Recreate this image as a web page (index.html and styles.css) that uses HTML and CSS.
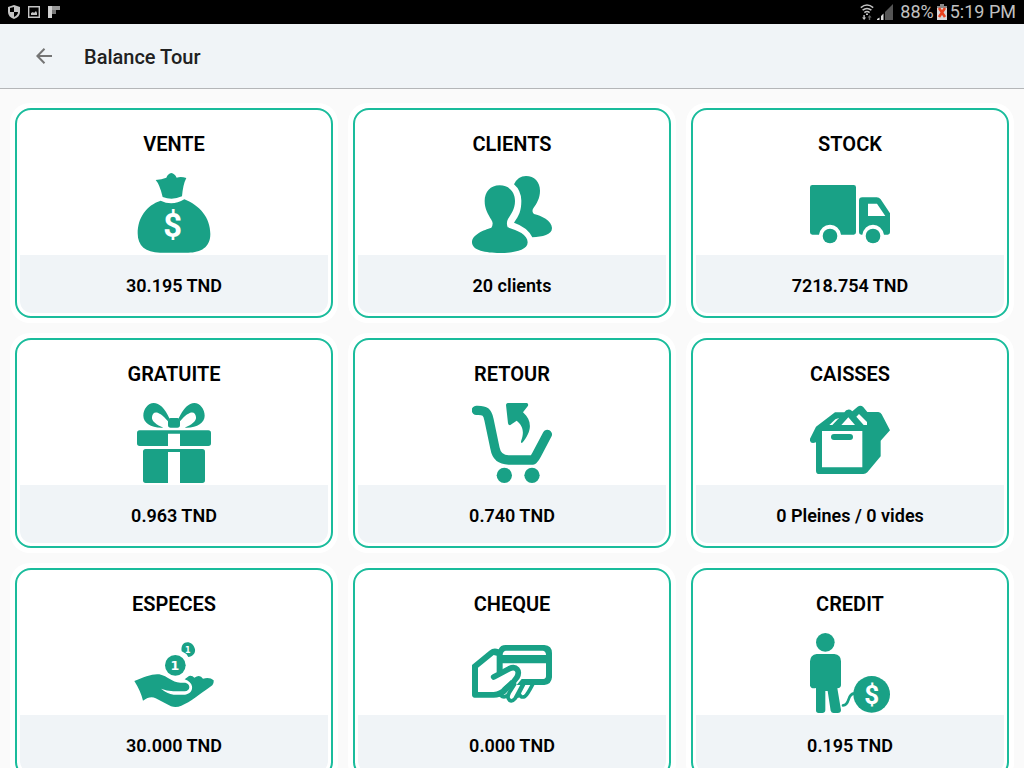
FILE: index.html
```html
<!DOCTYPE html>
<html lang="fr">
<head>
<meta charset="utf-8">
<meta name="viewport" content="width=device-width, initial-scale=1">
<title>Balance Tour</title>
<link rel="stylesheet" href="styles.css">
</head>
<body>
<div class="status">
  <div class="status-group status-left">
    <svg class="shield" viewBox="0 0 12 14" aria-hidden="true"><path fill="#c4c4c4" d="M6 0 12 2V7Q12 12 6 14Q0 12 0 7V2Z"/><path d="M6 2V7H2V3ZM6 7H10Q10 10 6 12Z"/></svg>
    <svg class="picture" viewBox="0 0 12 12" aria-hidden="true"><path fill="none" stroke="#c4c4c4" stroke-width="1.4" d="M.7.7H11.3V11.3H.7Z"/><path fill="#c4c4c4" d="M3 9V7L5 6 6 7 8 5 9 7V9Z"/></svg>
    <svg class="flip" viewBox="0 0 12 12" aria-hidden="true"><path fill="#999" d="M0 0H12V4H4V12H0Z"/><path fill="#777" d="M4 4H8V8H4Z"/><path fill="#d0d0d0" d="M0 0H4V12H0Z"/></svg>
  </div>
  <div class="status-group status-right">
    <svg class="wifi" viewBox="0 0 14 16" aria-hidden="true"><g fill="none" stroke="#c4c4c4" stroke-width="1.5"><path d="M.8 3.6Q7-1.4 13.2 3.6M2.6 6.2Q7 2.6 11.4 6.2M4.4 8.6Q7 6.4 9.6 8.6"/></g><path fill="#c4c4c4" d="M6 9.5H8V11H6ZM3.4 11H4.8V13.4H6.2L4.1 16 2 13.4H3.4Z"/><path fill="#666" d="M8.8 16V13.4H7.6L9.6 11 11.6 13.4H10.2V16Z"/></svg>
    <svg class="signal" viewBox="0 0 16 16" aria-hidden="true"><path fill="#555" d="M16 0V16H8V8Z"/><path fill="#ddd" d="M0 16V15L2.500 13.500V16ZM4 16V12L6.500 9.500V16Z"/></svg>
    <span class="percent">88%</span>
    <svg class="battery" viewBox="0 0 10 16" aria-hidden="true"><path fill="#888" d="M3 0H7V2H10V5H0V2H3Z"/><path fill="#d8d8d8" d="M0 4H10V16H0Z"/><path fill="none" stroke="#e8431f" stroke-width="2.600" d="M2 4 8 13M8 4 2 13"/></svg>
    <span>5:19 PM</span>
  </div>
</div>
<header class="bar">
  <button class="back" type="button" aria-label="Retour"><svg viewBox="0 0 16 16" aria-hidden="true"><path fill="none" stroke="#757575" stroke-width="2" d="M16 8H1.500M8.500.7 1.400 8 8.500 15.300"/></svg></button>
  <h1 class="heading">Balance Tour</h1>
</header>
<main class="grid">
  <section class="cell"><div class="card">
    <h2 class="title">VENTE</h2>
    <svg class="icon" viewBox="42 24 240 240" aria-hidden="true">
      <path d="M107 45Q125 44 139 38Q144 26 154 24Q164 26 170 38Q183 34 199 39Q189 58 186 94Q157 107 128 96Q119 58 107 45Z"/>
      <path d="M122 107Q157 124 193 103C239 121 271 158 271 207C271 247 242 263 205 263H120C77 263 53 243 53 205C53 158 79 121 122 107Z"/>
      <text class="coin dollar" x="158" y="216" font-size="98">$</text>
    </svg>
    <p class="value">30.195 TND</p>
  </div></section>
  <section class="cell"><div class="card">
    <h2 class="title">CLIENTS</h2>
    <svg class="icon" viewBox="36 24 240 240" aria-hidden="true">
      <path d="M119 61C148 61 165 82 165 108C165 132 153 148 144 162Q138 173 143 187C172 196 203 208 203 232C203 259 153 264 119 264C78 264 36 257 36 232C36 208 72 195 94 188Q102 175 94 164C84 148 74 132 74 108C74 81 91 61 119 61Z"/>
      <path d="M162 58Q174 33 198 33C223 33 240 51 240 77C240 100 230 115 220 130Q214 140 222 147C243 151 276 168 276 189C276 210 247 215 217 217Q203 187 162 173C177 151 184 138 184 107Q183 76 162 58Z"/>
    </svg>
    <p class="value">20 clients</p>
  </div></section>
  <section class="cell"><div class="card">
    <h2 class="title">STOCK</h2>
    <svg class="icon" viewBox="45 24 240 240" aria-hidden="true">
      <path d="M52 60H176Q183 60 183 67V202Q183 209 176 209H138Q132 180 105 179Q78 180 72 209H52Q45 209 45 202V67Q45 60 52 60Z"/>
      <path fill-rule="evenodd" d="M202 97H245Q252 97 257 103L285 145V202Q285 209 278 209H267Q260 180 234 179Q208 180 202 209H199Q192 209 192 202V107Q192 97 202 97ZM219 116V153H271L246 116Z"/>
      <circle cx="105" cy="213" r="22"/><circle cx="234" cy="213" r="22"/>
    </svg>
    <p class="value">7218.754 TND</p>
  </div></section>
  <section class="cell"><div class="card">
    <h2 class="title">GRATUITE</h2>
    <svg class="icon" viewBox="42 24 240 240" aria-hidden="true">
      <path fill-rule="evenodd" d="M148 70Q127 24 101 24C84 24 70 43 70 62C70 83 94 100 130 98C110 90 94 78 96 66C98 47 116 45 144 79ZM176 70Q198 24 223 24C240 24 254 43 254 62C254 83 230 100 194 98C214 90 230 78 228 66C226 47 208 45 180 79Z"/>
      <rect x="144" y="69" width="36" height="29" rx="8"/>
      <path d="M59 106H265Q273 106 273 114V145Q273 153 265 153H180V116H144V153H59Q51 153 51 145V114Q51 106 59 106ZM77 162H247Q255 162 255 170V256Q255 264 247 264H180V171H144V264H77Q69 264 69 256V170Q69 162 77 162Z"/>
    </svg>
    <p class="value">0.963 TND</p>
  </div></section>
  <section class="cell"><div class="card">
    <h2 class="title">RETOUR</h2>
    <svg class="icon" viewBox="36 24 240 240" aria-hidden="true">
      <path class="line" stroke-width="28" d="M49 46C76 45 82 51 87 74L105 160Q111 195 146 195H219Q225 189 230 179L262 118"/>
      <path d="M143 24H201Q207 28 203 34L189 52C219 79 215 110 186 144Q181 144 184 136C194 107 187 91 170 77L150 91Q145 91 144 85L138 30Q138 25 143 24Z"/>
      <circle cx="133" cy="241" r="23"/><circle cx="216" cy="241" r="23"/>
    </svg>
    <p class="value">0.740 TND</p>
  </div></section>
  <section class="cell"><div class="card">
    <h2 class="title">CAISSES</h2>
    <svg class="icon" viewBox="45 24 240 240" aria-hidden="true">
      <path fill-rule="evenodd" d="M63 95 120 52H148Q154 41 166 44L172 49L188 35Q196 30 204 35L217 51H250Q257 52 260 58L285 106L257 137V184L217 232Q212 237 205 237H73Q63 237 63 227V142Q47 147 45 137V131ZM81 108V217H202V108ZM103 90H112L132 69L121 73ZM139 90H180L160 67ZM192 57 184 65 206 90H216V81Z"/>
      <rect x="108" y="117" width="66" height="18" rx="9"/>
    </svg>
    <p class="value">0 Pleines / 0 vides</p>
  </div></section>
  <section class="cell"><div class="card">
    <h2 class="title">ESPECES</h2>
    <svg class="icon" viewBox="42 24 240 240" aria-hidden="true">
      <path d="M43 168C72 156 99 145 118 148C145 154 154 172 181 173H196Q208 176 208 187Q207 198 194 199H160Q140 198 123 191Q141 206 161 209H195C211 207 218 196 216 184Q213 170 194 163L207 153Q217 151 223 158Q240 147 249 161Q269 155 281 166Q282 178 273 184C239 207 212 232 184 242Q169 249 153 244L107 220Q91 211 69 227Q62 198 43 168Z"/>
      <circle cx="166" cy="121" r="31"/><path d="M185 79C179 44 219 43 225 73C227 86 217 95 205 96Q198 84 185 79Z"/>
      <text class="coin" x="165" y="135" font-size="38">1</text><text class="coin" x="203" y="83" font-size="24">1</text>
    </svg>
    <p class="value">30.000 TND</p>
  </div></section>
  <section class="cell"><div class="card">
    <h2 class="title">CHEQUE</h2>
    <svg class="icon" viewBox="36 24 240 240" aria-hidden="true">
      <path fill-rule="evenodd" d="M137 60H253Q276 62 276 84V157Q274 179 253 180H170L185 162H250Q258 161 258 153V115H128V142H110V92L101 90L54 128V201H101Q119 200 129 187L153 165L164 178L136 206Q121 218 101 218H44Q36 217 36 209V120L88 77Q101 66 116 73Q121 60 137 60ZM137 77Q128 79 128 90H258Q258 79 249 77Z"/>
      <path class="line" stroke-width="17" d="M101 156 148 131C169 122 181 137 171 157Q160 174 140 190"/>
      <path class="line" stroke-width="11" d="M122 211Q131 219 142 212L164 178M147 205C138 223 153 235 165 221L188 178M179 209Q184 220 195 214Q202 209 218 178M172 214 190 180"/>
    </svg>
    <p class="value">0.000 TND</p>
  </div></section>
  <section class="cell"><div class="card">
    <h2 class="title">CREDIT</h2>
    <svg class="icon" viewBox="45 24 240 240" aria-hidden="true">
      <circle cx="91" cy="52" r="28"/>
      <path d="M65 87H118Q138 89 138 109V181Q137 190 127 190L138 255Q138 264 128 264H116Q109 264 107 257L98 198H91V256Q90 264 82 264H71Q63 264 63 256V189Q48 192 45 182V109Q46 89 65 87Z"/>
      <circle cx="230" cy="208" r="55"/>
      <path class="line" stroke-width="8" stroke-linecap="butt" d="M144 241C167 240 154 207 178 205"/>
      <text class="coin dollar" x="230" y="236" font-size="78">$</text>
    </svg>
    <p class="value">0.195 TND</p>
  </div></section>
</main>
</body>
</html>
```
FILE: styles.css
```css
* { box-sizing: border-box; }

body {
  margin: 0;
  height: 100vh;
  display: flex;
  flex-direction: column;
  overflow: hidden;
  background: #fafafa;
  color: #000;
  font-family: Roboto, "Liberation Sans", sans-serif;
}

.status {
  flex: none;
  height: 24px;
  padding: 0 8px;
  display: flex;
  align-items: center;
  justify-content: space-between;
  background: #000;
  color: #c0c0c0;
  font-size: 18px;
  line-height: 24px;
}

.status-group { display: flex; align-items: center; }
.status-left { gap: 8px; }
.status-right { gap: 3px; }
.percent { margin-left: 4px; }
.shield { width: 12px; height: 14px; }
.picture, .flip { width: 12px; height: 12px; }
.wifi { width: 14px; height: 16px; }
.signal { width: 16px; height: 16px; }
.battery { width: 10px; height: 16px; }

.bar {
  flex: none;
  height: 65px;
  padding: 0 32px;
  display: flex;
  align-items: center;
  gap: 28px;
  background: #f0f4f7;
  border-bottom: 1px solid #b4b6b8;
}

.back {
  width: 24px;
  height: 24px;
  padding: 4px;
  border: 0;
  background: none;
}

.back svg { display: block; width: 16px; height: 16px; }

.heading {
  margin: 0;
  padding-top: 2px;
  color: #212121;
  font-size: 20px;
  font-weight: 500;
  line-height: 24px;
}

.grid {
  flex: 1;
  min-height: 0;
  padding: 14px 10px 10px;
  display: grid;
  grid-template-columns: repeat(3, 1fr);
  align-content: start;
  gap: 10px;
  overflow-y: auto;
  scrollbar-width: none;
}

.cell {
  padding: 5px;
  border-radius: 20px;
  background: #fff;
}

.card {
  padding: 22px 3px 3px;
  display: flex;
  flex-direction: column;
  align-items: center;
  border: 2px solid #1abc9c;
  border-radius: 16px;
}

.title {
  margin: 0 0 17px;
  font-size: 20px;
  font-weight: 600;
  line-height: 24px;
}

.icon {
  width: 80px;
  height: 80px;
  margin-bottom: 2px;
  fill: #19a186;
}

.line {
  fill: none;
  stroke: #19a186;
  stroke-linecap: round;
  stroke-linejoin: round;
}

.coin {
  fill: #fff;
  font-family: "DejaVu Sans", sans-serif;
  font-weight: 700;
  text-anchor: middle;
}

.dollar { font-family: Roboto, sans-serif; }

.value {
  align-self: stretch;
  margin: 0;
  padding: 21px 0 17px;
  border-radius: 0 0 12px 12px;
  background: #f0f4f7;
  text-align: center;
  font-size: 18px;
  font-weight: 600;
  line-height: 20px;
}
```
